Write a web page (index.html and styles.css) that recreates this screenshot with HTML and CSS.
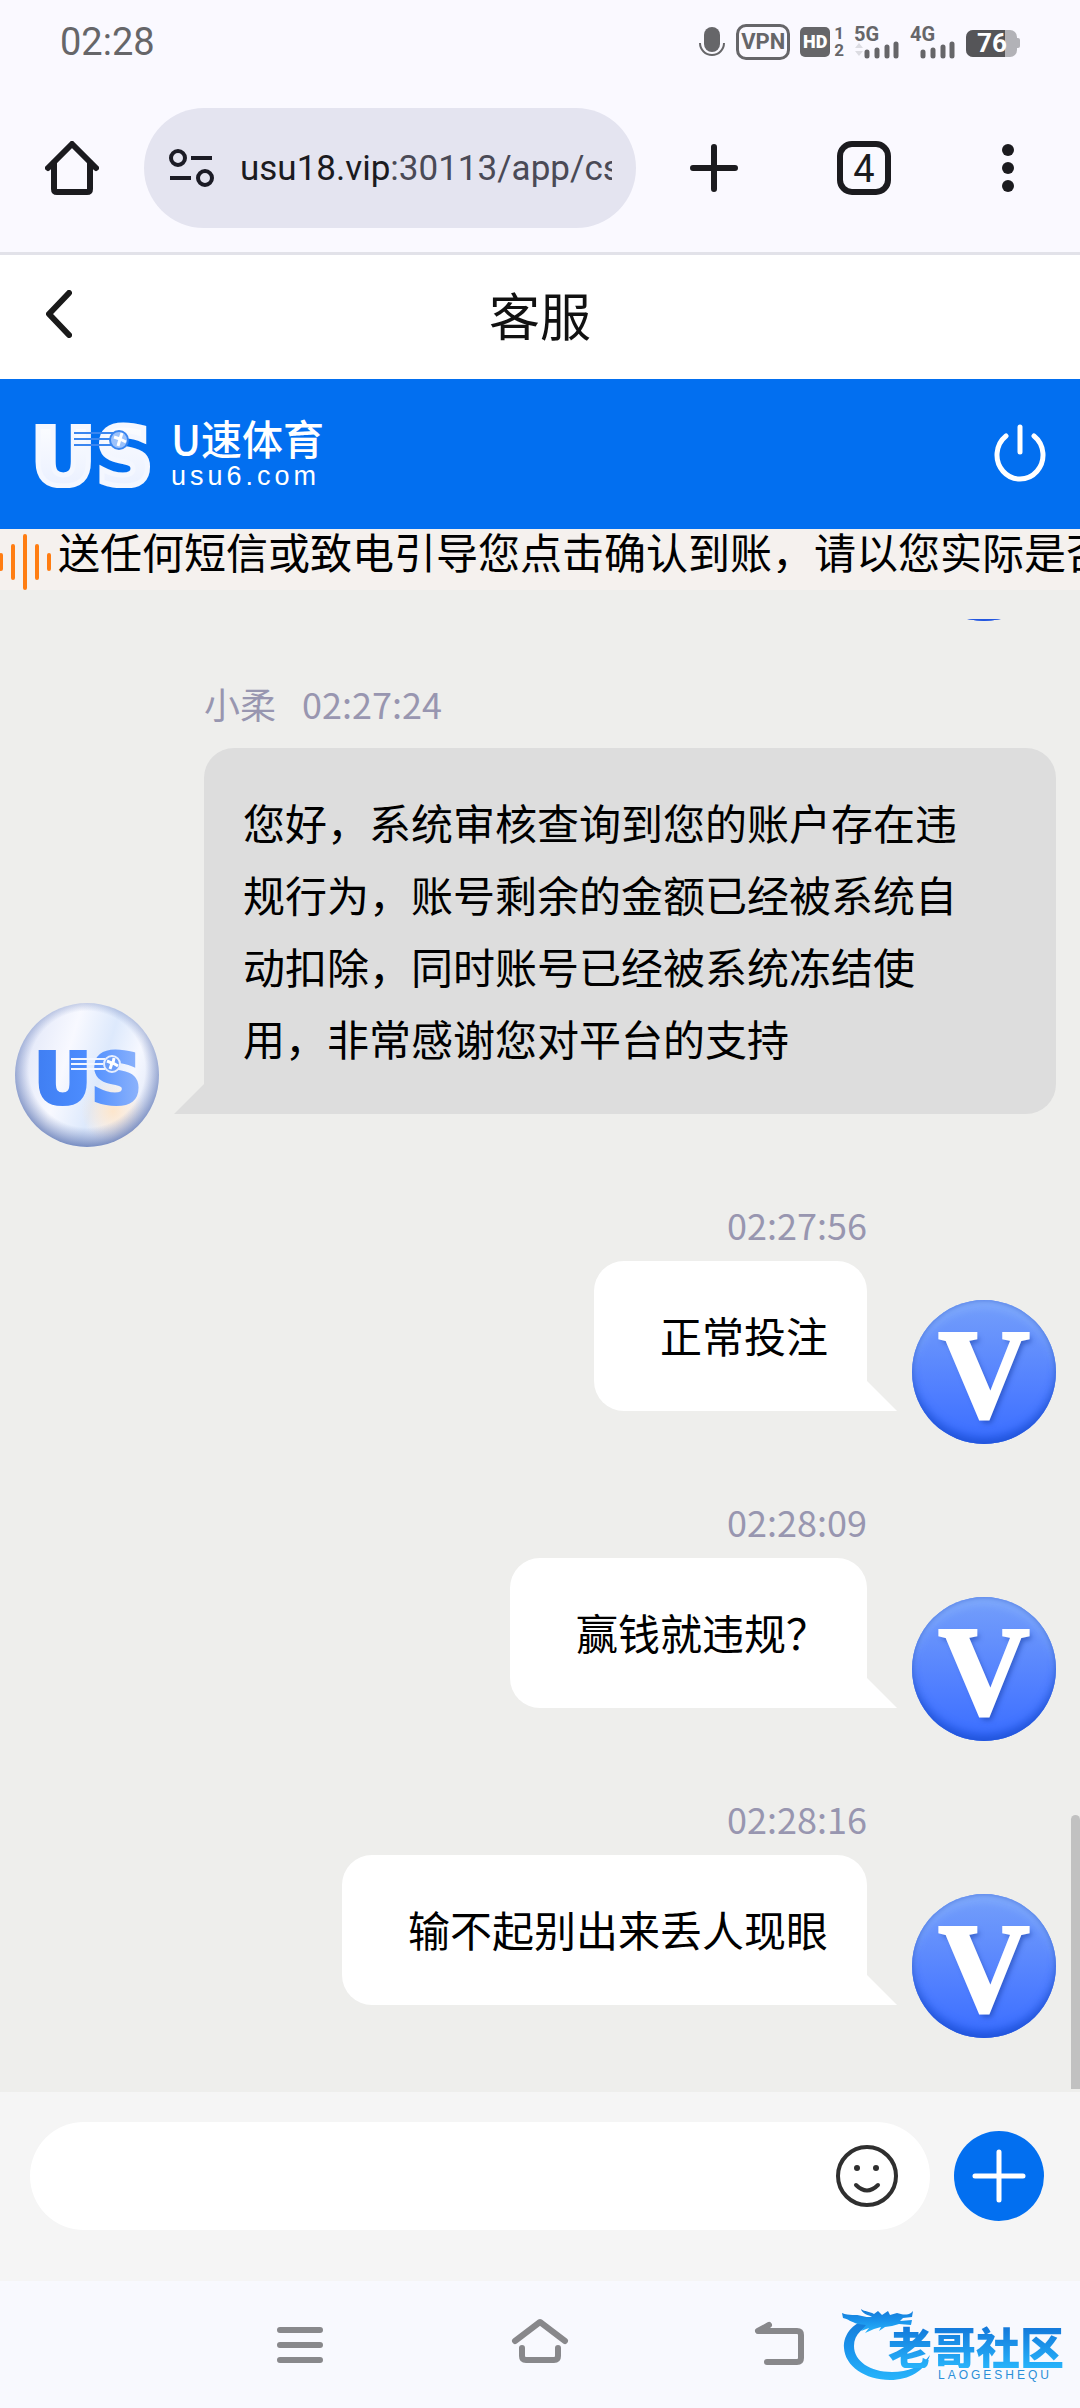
FILE: index.html
```html
<!DOCTYPE html>
<html lang="zh-CN">
<head>
    <meta charset="UTF-8">
    <meta name="viewport" content="width=device-width, initial-scale=1.0">
    <title>客服</title>
    <link rel="stylesheet" href="styles.css">
</head>
<body>
    <div class="phone">
        <header class="status-bar">
            <time class="clock">02:28</time>
            <div class="status-icons">
                <svg width="28" height="34" viewBox="0 0 28 34">
                    <rect x="6" y="2" width="16" height="25" rx="8" fill="#666669"/>
                    <path d="M2 18a12 12 0 0 0 24 0" fill="none" stroke="#666669" stroke-width="2"/>
                </svg>
                <span class="vpn">VPN</span>
                <span class="hd">HD</span>
                <span class="sims"><span>1</span><span>2</span></span>
                <span class="network">
                    <span>5G</span>
                    <svg width="46" height="18" viewBox="0 0 46 18">
                        <path d="M1 7l4-5 4 5zM1 10l4 5 4-5z" fill="#dcdce2"/>
                        <path d="M13 11v4M23 9v6M33 6v9M42 3v12" stroke="#666669" stroke-width="5" stroke-linecap="round"/>
                    </svg>
                </span>
                <span class="network">
                    <span>4G</span>
                    <svg width="46" height="18" viewBox="0 0 46 18">
                        <path d="M13 11v4M23 9v6M33 6v9M42 3v12" stroke="#666669" stroke-width="5" stroke-linecap="round"/>
                    </svg>
                </span>
                <svg width="54" height="36" viewBox="0 0 54 36">
                    <rect x="0" y="6" width="51" height="27" rx="7" fill="#b2b2b7"/>
                    <rect x="49" y="14" width="5" height="10" rx="2" fill="#b2b2b7"/>
                    <path d="M7 6h32v27H7a7 7 0 0 1-7-7V13a7 7 0 0 1 7-7z" fill="#555558"/>
                    <text class="charge" x="26" y="28" text-anchor="middle">76</text>
                </svg>
            </div>
        </header>

        <nav class="toolbar">
            <button class="tool" aria-label="主页">
                <svg width="54" height="54" viewBox="0 0 54 54" fill="none" stroke="#1b1b1f" stroke-width="6" stroke-linecap="round" stroke-linejoin="round">
                    <path d="M3 27L27 3l24 24"/>
                    <path d="M9 22v26q0 3 3 3h30q3 0 3-3V22"/>
                </svg>
            </button>
            <button class="address">
                <svg class="site-icon" width="46" height="42" viewBox="0 0 46 42" fill="none" stroke="#1b1b25" stroke-width="4">
                    <circle cx="10" cy="11" r="7"/>
                    <path d="M23 11h21M2 31h21"/>
                    <circle cx="37" cy="31" r="7"/>
                </svg>
                <span class="url">usu18.vip<span class="url-rest">:30113/app/cs</span></span>
            </button>
            <button class="tool tool-wide" aria-label="新标签页">
                <svg width="48" height="48" viewBox="0 0 48 48" stroke="#1b1b1f" stroke-width="6" stroke-linecap="round">
                    <path d="M3 24h42M24 3v42"/>
                </svg>
            </button>
            <button class="tool"><span class="tabs">4</span></button>
            <button class="tool" aria-label="更多">
                <svg width="12" height="48" viewBox="0 0 12 48" fill="#1b1b1f">
                    <circle cx="6" cy="6" r="6"/>
                    <circle cx="6" cy="24" r="6"/>
                    <circle cx="6" cy="42" r="6"/>
                </svg>
            </button>
        </nav>

        <div class="page-title">
            <button class="back" aria-label="返回">
                <svg width="26" height="48" viewBox="0 0 26 48" fill="none" stroke="#1a1a1a" stroke-width="6" stroke-linecap="round" stroke-linejoin="round">
                    <path d="M23 3L3 24l20 21"/>
                </svg>
            </button>
            <h1>客服</h1>
        </div>

        <div class="brand-bar">
            <a class="brand" href="#">
                <svg width="126" height="68" viewBox="0 0 126 68">
                    <defs>
                        <linearGradient id="usWhite" x1="0" y1="0" x2="0" y2="1">
                            <stop offset="0" stop-color="#ffffff"/>
                            <stop offset="1" stop-color="#e6edff"/>
                        </linearGradient>
                    </defs>
                    <text class="mark-us mark-us-large" x="62" y="65" text-anchor="middle" fill="url(#usWhite)" stroke="#f4f7ff">US</text>
                    <path d="M44 13h40M44 19h38M44 25h40" stroke="#3a86f0" stroke-width="2"/>
                    <circle cx="89" cy="20" r="9" fill="#9cc2fb" stroke="#3a86f0" stroke-width="2"/>
                    <path d="M84 17l6 2-2 7M92 13l-2 6 6 3" fill="none" stroke="#fff" stroke-width="3"/>
                </svg>
                <span class="brand-text">
                    <span class="brand-name">U速体育</span>
                    <span class="brand-site">usu6.com</span>
                </span>
            </a>
            <button class="power" aria-label="退出">
                <svg width="54" height="60" viewBox="0 2 54 60" fill="none" stroke="#fff" stroke-width="5" stroke-linecap="round">
                    <path d="M27 5v25"/>
                    <path d="M13 14a23 24 0 1 0 28 0"/>
                </svg>
            </button>
        </div>

        <div class="notice">
            <svg class="wave" width="52" height="58" viewBox="0 0 52 58" stroke="#ff7d12" stroke-width="4" stroke-linecap="round">
                <path d="M1 23v14M13 14v32M25 4v52M37 14v32M49 23v14"/>
            </svg>
            <p>送任何短信或致电引导您点击确认到账，请以您实际是否</p>
        </div>

        <main class="chat">
            <div class="message mine">
                <div class="avatar avatar-user"></div>
            </div>

            <div class="message agent">
                <svg class="avatar" viewBox="0 0 144 144">
                    <defs>
                        <linearGradient id="pearl" x1="0" y1="0.3" x2="1" y2="0.6">
                            <stop offset="0" stop-color="#dfe5f8"/>
                            <stop offset="0.35" stop-color="#f8f9ff"/>
                            <stop offset="0.6" stop-color="#dde9fc"/>
                            <stop offset="0.8" stop-color="#f6f8ff"/>
                            <stop offset="1" stop-color="#e0e7f8"/>
                        </linearGradient>
                        <radialGradient id="pearlShade" cx="0.5" cy="0.46" r="0.56">
                            <stop offset="0.72" stop-color="#6d83bd" stop-opacity="0"/>
                            <stop offset="1" stop-color="#6078b4" stop-opacity="0.95"/>
                        </radialGradient>
                        <radialGradient id="pearlGlow">
                            <stop offset="0" stop-color="#fde6cc"/>
                            <stop offset="1" stop-color="#fde6cc" stop-opacity="0"/>
                        </radialGradient>
                        <linearGradient id="usBlue" x1="0" y1="0" x2="1" y2="0">
                            <stop offset="0" stop-color="#3f7ef2"/>
                            <stop offset="0.5" stop-color="#4d8dff"/>
                            <stop offset="1" stop-color="#8fb4fb"/>
                        </linearGradient>
                    </defs>
                    <circle cx="72" cy="72" r="72" fill="url(#pearl)"/>
                    <circle cx="98" cy="108" r="32" fill="url(#pearlGlow)"/>
                    <circle cx="72" cy="72" r="72" fill="url(#pearlShade)"/>
                    <text class="mark-us" x="73" y="100" text-anchor="middle" fill="url(#usBlue)" stroke="url(#usBlue)">US</text>
                    <path d="M56 56h34M56 61h32M56 66h34" stroke="#f2f6ff" stroke-width="2"/>
                    <circle cx="97" cy="61" r="8" fill="#6c9ef9" stroke="#e8effe" stroke-width="2"/>
                    <path d="M92 58l5 2-2 6M99 55l-1 5 5 3" fill="none" stroke="#fff" stroke-width="3"/>
                </svg>
                <div class="body">
                    <div class="meta"><span>小柔</span><time>02:27:24</time></div>
                    <p class="bubble">您好，系统审核查询到您的账户存在违规行为，账号剩余的金额已经被系统自动扣除，同时账号已经被系统冻结使用，非常感谢您对平台的支持</p>
                </div>
            </div>

            <div class="message mine">
                <div class="body">
                    <div class="meta"><time>02:27:56</time></div>
                    <p class="bubble">正常投注</p>
                </div>
                <div class="avatar avatar-user">V</div>
            </div>

            <div class="message mine">
                <div class="body">
                    <div class="meta"><time>02:28:09</time></div>
                    <p class="bubble">赢钱就违规？</p>
                </div>
                <div class="avatar avatar-user">V</div>
            </div>

            <div class="message mine">
                <div class="body">
                    <div class="meta"><time>02:28:16</time></div>
                    <p class="bubble">输不起别出来丢人现眼</p>
                </div>
                <div class="avatar avatar-user">V</div>
            </div>
            <div class="scroll-thumb"></div>
        </main>

        <form class="composer">
            <div class="field">
                <input type="text" aria-label="消息">
                <button type="button" class="emoji" aria-label="表情">
                    <svg width="64" height="64" viewBox="0 0 64 64" fill="none" stroke="#2f2f2f" stroke-width="4" stroke-linecap="round">
                        <circle cx="32" cy="32" r="29"/>
                        <path d="M21 41q11 11 22 0"/>
                        <g fill="#2f2f2f" stroke="none">
                            <circle cx="22" cy="24" r="3"/>
                            <circle cx="41" cy="24" r="3"/>
                        </g>
                    </svg>
                </button>
            </div>
            <button type="button" class="add" aria-label="添加">
                <svg width="54" height="54" viewBox="0 0 54 54" stroke="#fff" stroke-width="5" stroke-linecap="round">
                    <path d="M3 27h48M27 3v48"/>
                </svg>
            </button>
        </form>

        <footer class="nav-bar">
            <div class="nav-keys">
                <button class="key" aria-label="最近任务">
                    <svg width="46" height="42" viewBox="0 0 46 42" stroke="#88888b" stroke-width="6" stroke-linecap="round">
                        <path d="M3 6h40M3 21h40M3 36h40"/>
                    </svg>
                </button>
                <button class="key" aria-label="主屏幕">
                    <svg width="58" height="50" viewBox="0 0 58 50" fill="none" stroke="#88888b" stroke-width="6" stroke-linecap="round" stroke-linejoin="round">
                        <path d="M4 21L29 2l25 19"/>
                        <path d="M11 28v8q0 4 4 4h28q4 0 4-4v-8"/>
                    </svg>
                </button>
                <button class="key" aria-label="后退">
                    <svg width="50" height="46" viewBox="0 0 50 46" fill="none" stroke="#88888b" stroke-width="6" stroke-linecap="round" stroke-linejoin="round">
                        <path d="M14 3L3 9h39q4 0 4 4v23q0 4-4 4H12"/>
                    </svg>
                </button>
            </div>
            <div class="watermark">
                <svg width="90" height="74" viewBox="0 0 90 74" fill="url(#dragonBlue)">
                    <defs>
                        <linearGradient id="dragonBlue" x1="0" y1="0" x2="0" y2="1">
                            <stop offset="0" stop-color="#1579d6"/>
                            <stop offset="0.5" stop-color="#1a93ec"/>
                            <stop offset="1" stop-color="#27b4fb"/>
                        </linearGradient>
                    </defs>
                    <path d="M31 9C12 13 1 26 2 40c1 18 21 32 46 32 19 0 35-9 40-25-9 12-22 17-38 17C28 64 12 53 12 38c0-12 9-20 26-25z"/>
                    <path d="M0 5c7 3 14 1 20 3 3 1 6 1 10 1-3-2-10-3-11-8 4 3 8 2 13 5l4-3 4 4 6-4 2 4 7-2c4 1 9 3 14 0l2-2-1 6-9 1-3 3 12-1-1 5-12-1-7 2-7 1-6 4 2-4-7 2-9 4 4-5-8 3 5-6-8-1c-7-2-10-5-15-6z"/>
                </svg>
                <div class="watermark-text">
                    <span class="wm-name">老哥社区</span>
                    <span class="wm-latin">LAOGESHEQU</span>
                </div>
            </div>
        </footer>
    </div>
</body>
</html>
```
FILE: styles.css
```css
* {
    box-sizing: border-box;
    margin: 0;
    padding: 0;
}
body {
    font-family: "Noto Sans CJK SC", sans-serif;
    background: #eeeeec;
    color: #000;
}
button {
    border: none;
    background: none;
    font: inherit;
    color: inherit;
    cursor: pointer;
}
svg {
    display: block;
    flex: none;
}
.phone {
    display: flex;
    flex-direction: column;
    height: 100vh;
    overflow: hidden;
}

/* status bar */
.status-bar {
    display: flex;
    justify-content: space-between;
    align-items: center;
    height: 84px;
    padding: 0 60px;
    background: #faf9ff;
    font-family: Roboto, sans-serif;
    color: #666669;
}
.clock {
    font-size: 38px;
}
.status-icons {
    display: flex;
    align-items: center;
    gap: 10px;
}
.vpn {
    border: 3px solid #666669;
    border-radius: 10px;
    padding: 0 2px;
    font-size: 22px;
    line-height: 30px;
    font-weight: 700;
}
.hd {
    width: 30px;
    border-radius: 5px;
    background: #666669;
    font-size: 18px;
    line-height: 30px;
    font-weight: 900;
    text-align: center;
    color: #fff;
}
.sims {
    display: flex;
    flex-direction: column;
    margin-left: -6px;
    font-size: 17px;
    line-height: 17px;
    font-weight: 700;
}
.network {
    display: flex;
    flex-direction: column;
    font-size: 20px;
    line-height: 18px;
    font-weight: 700;
}
.network svg {
    margin-top: -2px;
}
.charge {
    font-size: 26px;
    font-weight: 700;
    fill: #fff;
}

/* browser toolbar */
.toolbar {
    display: flex;
    align-items: center;
    height: 171px;
    border-bottom: 3px solid #e2e2e9;
    background: #faf9ff;
    color: #1b1b1f;
}
.tool {
    display: flex;
    justify-content: center;
    align-items: center;
    width: 144px;
    height: 120px;
}
.tool-wide {
    width: 156px;
}
.address {
    display: flex;
    align-items: center;
    flex: 1;
    min-width: 0;
    height: 120px;
    padding: 0 24px;
    border-radius: 60px;
    background: #e4e4f0;
    font-family: Roboto, sans-serif;
    font-size: 35px;
    text-align: left;
}
.site-icon {
    margin-right: 26px;
}
.url {
    flex: 1;
    overflow: hidden;
    white-space: nowrap;
}
.url-rest {
    color: #4a4a56;
}
.tabs {
    width: 54px;
    height: 54px;
    border: 6px solid #1b1b1f;
    border-radius: 15px;
    font-family: Roboto, sans-serif;
    font-size: 38px;
    line-height: 44px;
    text-align: center;
}

/* page header */
.page-title {
    display: grid;
    grid-template-columns: 120px 1fr 120px;
    align-items: center;
    height: 124px;
    padding-bottom: 6px;
    background: #fff;
}
.back {
    padding-left: 46px;
}
.page-title h1 {
    font-size: 51px;
    line-height: 72px;
    font-weight: 400;
    text-align: center;
    color: #111;
}
.brand-bar {
    display: flex;
    justify-content: space-between;
    align-items: center;
    height: 150px;
    padding: 0 33px 0 30px;
    background: #026ff0;
}
.brand {
    display: flex;
    align-items: center;
    gap: 15px;
    color: #fff;
    text-decoration: none;
}
.brand-text {
    display: flex;
    flex-direction: column;
}
.brand-name {
    font-size: 41px;
    line-height: 44px;
    font-weight: 500;
}
.brand-site {
    font-family: "Liberation Sans", sans-serif;
    font-size: 27px;
    line-height: 34px;
    letter-spacing: 4px;
}
.mark-us {
    font-family: "DejaVu Sans", sans-serif;
    font-weight: 700;
    font-size: 70px;
    stroke-width: 4px;
}
.mark-us-large {
    font-size: 80px;
    stroke-width: 5px;
}
.notice {
    display: flex;
    align-items: flex-start;
    gap: 6px;
    height: 61px;
    overflow: hidden;
    background: #f5f1ee;
}
.wave {
    margin-top: 3px;
}
.notice p {
    flex: 1;
    overflow: hidden;
    font-size: 42px;
    line-height: 44px;
    white-space: nowrap;
}

/* messages, newest at the bottom */
.chat {
    position: relative;
    flex: 1;
    min-height: 0;
    display: flex;
    flex-direction: column;
    justify-content: flex-end;
    gap: 54px;
    margin-top: 29px;
    padding: 0 24px 54px 15px;
    overflow: hidden;
}
.message {
    display: flex;
    align-items: flex-end;
    gap: 45px;
}
.mine {
    justify-content: flex-end;
}
.avatar {
    width: 144px;
    height: 144px;
}
.avatar-user {
    border-radius: 50%;
    background: linear-gradient(#749ffb, #6490fc 30%, #4f7eff 65%, #3a6eff);
    box-shadow: inset 0 -8px 10px -2px #1f53dc, inset 0 0 6px #4a74dc, inset 0 8px 10px -2px #86b0fc;
    font-family: "Liberation Serif", serif;
    font-size: 126px;
    line-height: 150px;
    font-weight: 700;
    text-align: center;
    color: #fff;
    -webkit-text-stroke: 3px #fff;
    text-shadow: 3px 4px 5px rgba(23, 64, 168, 0.6);
}
.body {
    margin-bottom: 33px;
}
.agent .body {
    flex: 1;
}
.meta {
    display: flex;
    gap: 26px;
    margin-bottom: 14px;
    font-size: 36px;
    line-height: 46px;
    color: #9896b0;
}
.agent .meta {
    padding: 5px 0 8px;
}
.mine .meta {
    justify-content: flex-end;
}
.bubble {
    position: relative;
    border-radius: 30px;
    font-size: 42px;
    line-height: 72px;
}
.bubble::after {
    content: '';
    position: absolute;
    bottom: 0;
    width: 30px;
    height: 30px;
}
.agent .bubble {
    padding: 38px 66px 40px 39px;
    border-bottom-left-radius: 0;
    background: #ddd;
}
.agent .bubble::after {
    right: 100%;
    background: #ddd;
    clip-path: polygon(100% 0, 100% 100%, 0 100%);
}
.mine .bubble {
    padding: 38px 39px 40px 66px;
    border-bottom-right-radius: 0;
    background: #fff;
}
.mine .bubble::after {
    left: 100%;
    background: #fff;
    clip-path: polygon(0 0, 100% 100%, 0 100%);
}
.scroll-thumb {
    position: absolute;
    right: 0;
    bottom: 3px;
    width: 9px;
    height: 274px;
    border-radius: 5px 5px 0 0;
    background: #c1c1c1;
}

/* input area */
.composer {
    display: flex;
    align-items: flex-start;
    gap: 24px;
    height: 189px;
    padding: 30px 36px 0 30px;
    background: #f5f5f5;
}
.field {
    flex: 1;
    display: flex;
    align-items: center;
    height: 108px;
    padding: 0 31px 0 48px;
    border-radius: 54px;
    background: #fff;
}
.field input {
    flex: 1;
    min-width: 0;
    border: none;
    outline: none;
    background: none;
    font: inherit;
    font-size: 42px;
}
.add {
    display: flex;
    justify-content: center;
    align-items: center;
    width: 90px;
    height: 90px;
    margin-top: 9px;
    border-radius: 50%;
    background: #026ff0;
}

/* system navigation */
.nav-bar {
    position: relative;
    height: 127px;
    background: #f8f9fe;
}
.nav-keys {
    display: flex;
    width: 66.6%;
    height: 100%;
    margin: 0 auto;
}
.key {
    flex: 1;
    display: flex;
    justify-content: center;
    align-items: center;
}
.key svg {
    overflow: visible;
}
.watermark {
    position: absolute;
    right: 16px;
    bottom: 26px;
    display: flex;
    align-items: flex-end;
}
.watermark-text {
    display: flex;
    flex-direction: column;
    margin-left: -44px;
}
.wm-name {
    font-size: 44px;
    font-weight: 900;
    line-height: 44px;
    background: linear-gradient(#1274d8, #27b4fb);
    -webkit-background-clip: text;
    background-clip: text;
    color: transparent;
}
.wm-latin {
    padding-left: 50px;
    font-family: "Liberation Sans", sans-serif;
    font-size: 12px;
    line-height: 14px;
    letter-spacing: 3px;
    color: #2a8fd8;
}
```
